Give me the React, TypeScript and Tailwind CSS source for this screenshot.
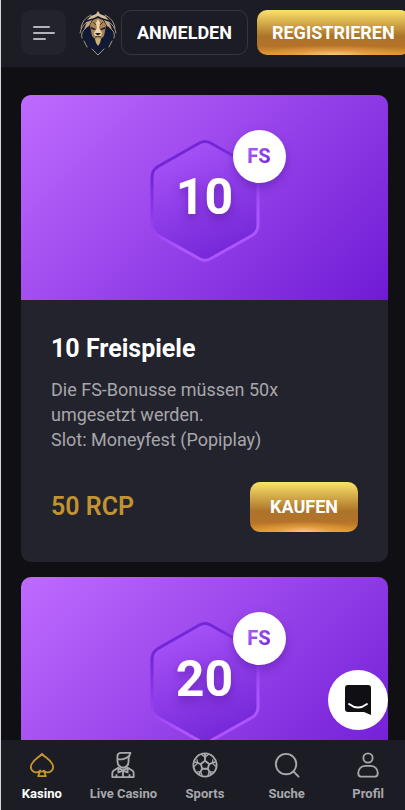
import type { ReactNode } from "react";

const offers = [
  { spins: 10, price: 50 },
  { spins: 20, price: 100 },
];

const goldButton =
  "shrink-0 rounded-[10px] font-bold text-white bg-[radial-gradient(ellipse_50%_22%_at_50%_100%,#f5c982_0%,#efa94a80_50%,transparent_100%),linear-gradient(180deg,#fbe26b_0%,#ac7429_58%,#b4722a_80%,#e69a2c_100%)]";

const LionLogo = () => (
  <svg viewBox="0 0 38 46" className="h-[46px] w-[38px]" aria-hidden="true">
    <path d="M19 1 13 3 7 8 3 14 1 21 2 27 5 31 8 37 13 40 19 45 25 40 30 37 33 31 36 27 37 21 35 14 31 8 25 3Z" fill="#101a35" />
    <g fill="none" stroke="#b09a78" strokeWidth="1" strokeLinecap="round">
      <path d="M12 5C6 8 3 12 2 18M8 12C4 15 2 18 1 23M7 18C3 21 2 24 3 28M5 31 8 37" />
      <path d="M26 5C32 8 35 12 36 18M30 12C34 15 36 18 37 23M31 18C35 21 36 24 35 28M33 31 30 37" />
      <path d="M13 39 19 45 25 39" />
    </g>
    <path d="M19 1 17 4 12 6 8 10 15 8 19 6 23 8 30 10 26 6 21 4Z" fill="#d8bd8e" />
    <path d="M13 10 8 12 5 19 10 16ZM25 10 30 12 33 19 28 16Z" fill="#c9a777" />
    <path d="M19 8 14 10 11 15 12 21 13 26 16 29H22L25 26 26 21 27 15 24 10Z" fill="#a98356" />
    <path d="M19 9 17 13 18 18 15 23 16 26H22L23 23 20 18 21 13Z" fill="#ecd5a8" />
    <path d="M12 17 17 19 16 20 12 19ZM26 17 21 19 22 20 26 19ZM16 23H22L20 25H18Z" fill="#211d27" />
    <path d="M14 12 17 15M24 12 21 15M16 27 19 26 22 27" fill="none" stroke="#493a30" />
    <path d="M16 29 19 28 22 29 21 33 19 36 17 33Z" fill="#d0ae7c" />
  </svg>
);

const HexBadge = ({ spins, id }: { spins: number; id: string }) => (
  <div className="relative grid h-[122px] w-[110px] place-items-center pb-2">
    <svg viewBox="0 0 110 122" className="absolute inset-0" aria-hidden="true">
      <defs>
        <linearGradient id={`${id}-edge`} x1="0.2" y1="0" x2="0.6" y2="1">
          <stop offset="0.2" stopColor="#7426d7" />
          <stop offset="0.8" stopColor="#ad55ff" />
        </linearGradient>
        <linearGradient id={`${id}-fill`} x1="0.2" y1="0" x2="0.6" y2="1">
          <stop offset="0" stopColor="#aa55fa" />
          <stop offset="1" stopColor="#7426d7" />
        </linearGradient>
      </defs>
      <path
        d="M49 3.2Q55 0 61 3.2L102 26.5Q108 30 108 37V85Q108 92 102 95.500L61 118.500Q55 122 49 118.500L8 95.500Q2 92 2 85V37Q2 30 8 26.500Z"
        fill={`url(#${id}-fill)`}
        stroke={`url(#${id}-edge)`}
        strokeWidth="3"
      />
    </svg>
    <span className="relative text-[50px] leading-none font-bold text-white [text-shadow:0_5px_8px_#4b159080]">{spins}</span>
    <span className="absolute -top-2.5 -right-[26px] grid size-[53px] place-items-center rounded-full bg-white shadow-[0_5px_10px_#4b159066]">
      <span className="bg-linear-to-br from-[#b565ff] to-[#6d20ce] bg-clip-text text-xl font-extrabold text-transparent">FS</span>
    </span>
  </div>
);

const OfferCard = ({ spins, price }: { spins: number; price: number }) => (
  <article className="shrink-0 overflow-hidden rounded-[10px] bg-[#23232d]">
    <div className="grid h-[205px] place-items-center bg-[linear-gradient(135deg,#bf6bff_0%,#6f1bd5_100%)] pt-1.5">
      <HexBadge spins={spins} id={`hex-${spins}`} />
    </div>
    <div className="p-[30px]">
      <h2 className="pt-1 text-[25px] leading-[30px] font-bold text-white">{spins} Freispiele</h2>
      <p className="mt-[13px] text-lg leading-[25px] text-[#a7a7ab]">
        Die FS-Bonusse müssen 50x
        <br />
        umgesetzt werden.
        <br />
        Slot: Moneyfest (Popiplay)
      </p>
      <div className="mt-[30px] flex items-center justify-between">
        <span className="text-[25px] font-semibold text-[#c19331]">{price} RCP</span>
        <button className={`${goldButton} h-[50px] px-5 text-lg`}>KAUFEN</button>
      </div>
    </div>
  </article>
);

const SpadeIcon = () => (
  <>
    <path d="M14 2C11 6 2 9.500 2 16c0 6 7.500 7.500 10 4L10 26h8l-2-6c2.500 3.500 10 2 10-4 0-6.500-9-10-12-14Z" />
    <path d="M12 21h4" />
  </>
);

const DealerIcon = () => (
  <>
    <path d="M8 9V5q0-4 4-4h10l-2 5v4q0 6-6 7-6-1-6-8Z" />
    <path d="M8 8h5q5-1 8-4" />
    <path d="M9 17 4 20q-1.500 1-1.500 3v4h23v-4q0-2-1.500-3l-5-3" />
    <path d="m9 17 5 3 5-3v5l-5-2-5 2ZM14 21v6M7 24v3M21 24v3" />
  </>
);

const BallIcon = () => (
  <>
    <circle cx="14" cy="14" r="12.500" />
    <path d="m14 9.500 4.500 3.500-1.500 5h-6l-1.500-5Z" />
    <path d="M14 9.500V2M9.500 13 2.500 10.500M18.500 13l7-2.500M11 18l-3.500 6M17 18l3.500 6" />
    <path d="m10 2.500 4 3 4-3M2 16l4-4-.5-4M26 16l-4-4 .5-4M5 21.500l4.500 0 1.500 4.500M23 21.500l-4.500 0-1.500 4.500" strokeWidth="1.400" />
  </>
);

const SearchIcon = () => (
  <>
    <circle cx="13" cy="13" r="11" />
    <path d="m21 21 6 6" />
  </>
);

const UserIcon = () => (
  <>
    <circle cx="14" cy="6.500" r="5" />
    <path d="M11 15h6c5 0 7.500 4 7.500 8 0 2.500-1 3.500-3 3.500h-15c-2 0-3-1-3-3.500 0-4 2.500-8 7.500-8Z" />
  </>
);

const NavItem = ({ label, active, children }: { label: string; active?: boolean; children: ReactNode }) => (
  <a href="#" className={`flex flex-1 flex-col items-center whitespace-nowrap ${active ? "text-white" : "text-[#a8a8ad]"}`}>
    <svg viewBox="0 0 28 28" className={`size-[26px] ${active ? "text-[#c6962c]" : ""}`} fill="none" stroke="currentColor" strokeWidth="2" strokeLinejoin="round" aria-hidden="true">
      {children}
    </svg>
    <span className="mt-2 text-[13px] leading-4 font-bold">{label}</span>
  </a>
);

export default function App() {
  return (
    <div className="flex h-screen flex-col overflow-hidden border-l border-[#d5d5dc] bg-[#101014] font-[Roboto,sans-serif]">
      <header className="flex h-[67px] shrink-0 items-center bg-[#1b1c24] pb-0.5 pl-5">
        <button aria-label="Menü" className="grid size-[45px] shrink-0 place-items-center rounded-[10px] bg-[#22232c]">
          <svg viewBox="0 0 22 16" className="h-4 w-[22px]" stroke="#b4b4b8" strokeWidth="2" strokeLinecap="round" aria-hidden="true">
            <path d="M1 2h15M1 8h20M1 14h11" />
          </svg>
        </button>
        <a href="#" aria-label="Startseite" className="mr-1 ml-[13px] shrink-0">
          <LionLogo />
        </a>
        <button className="h-[45px] shrink-0 rounded-[10px] border border-[#34353f] px-[15px] text-lg font-bold text-white">ANMELDEN</button>
        <button className={`${goldButton} ml-[9px] h-[45px] px-[15px] text-lg`}>REGISTRIEREN</button>
      </header>

      <main className="flex min-h-0 flex-1 flex-col gap-[15px] overflow-y-auto pt-7 pr-[17px] pb-7 pl-5 [scrollbar-width:none]">
        {offers.map((offer) => (
          <OfferCard key={offer.spins} {...offer} />
        ))}
      </main>

      <button aria-label="Chat öffnen" className="fixed right-[17px] bottom-20 z-10 grid size-[60px] place-items-center rounded-full bg-white">
        <svg viewBox="0 0 28 32" className="h-8 w-7" aria-hidden="true">
          <path d="M4 1h20q3 0 3 3v27l-7-3H4q-3 0-3-3V4q0-3 3-3Z" fill="#101014" />
          <path d="M5 20q9 7 18 0" fill="none" stroke="#fff" strokeWidth="1.800" strokeLinecap="round" />
        </svg>
      </button>

      <nav className="-mr-1 flex h-[70px] shrink-0 bg-[#1b1c24] pt-3">
        <NavItem label="Kasino" active>
          <SpadeIcon />
        </NavItem>
        <NavItem label="Live Casino">
          <DealerIcon />
        </NavItem>
        <NavItem label="Sports">
          <BallIcon />
        </NavItem>
        <NavItem label="Suche">
          <SearchIcon />
        </NavItem>
        <NavItem label="Profil">
          <UserIcon />
        </NavItem>
      </nav>
    </div>
  );
}
